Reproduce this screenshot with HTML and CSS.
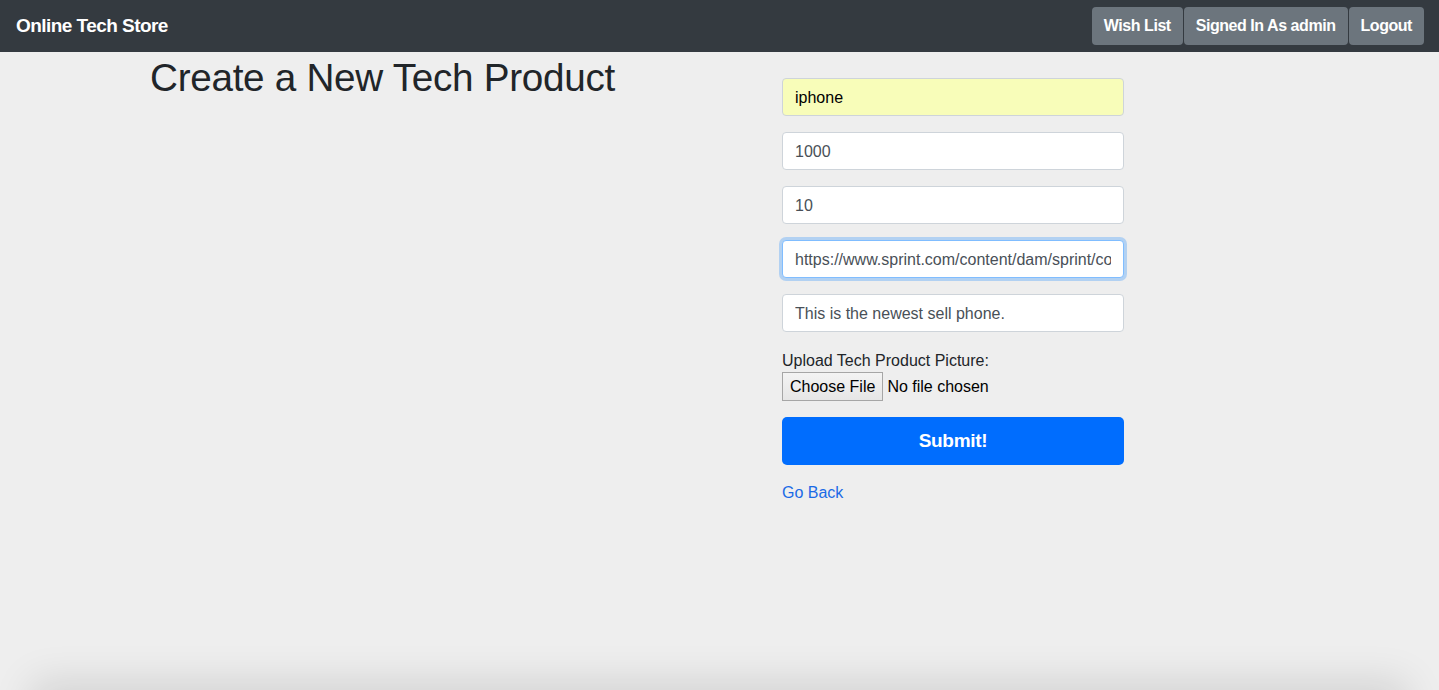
FILE: index.html
```html
<!DOCTYPE html>
<html lang="en">
<head>
<meta charset="utf-8">
<title>Online Tech Store</title>
<link rel="stylesheet" href="styles.css">
</head>
<body>
<nav class="navbar">
  <a class="brand" href="#">Online Tech Store</a>
  <div class="nav-buttons">
    <button class="btn-nav">Wish List</button>
    <button class="btn-nav">Signed In As admin</button>
    <button class="btn-nav">Logout</button>
  </div>
</nav>
<main class="page">
  <div class="left-col">
    <h1 class="title">Create a New Tech Product</h1>
  </div>
  <form class="product-form">
    <input class="field autofill" type="text" value="iphone">
    <input class="field" type="text" value="1000">
    <input class="field" type="text" value="10">
    <input class="field focused" type="text" value="https://www.sprint.com/content/dam/sprint/commerce/devices/apple/iphone_xs_max/gold/devicenb_650x900.png">
    <input class="field" type="text" value="This is the newest sell phone.">
    <label class="upload-label">Upload Tech Product Picture:</label>
    <div class="file-row">
      <button type="button" class="file-btn">Choose File</button>
      <span class="file-status">No file chosen</span>
    </div>
    <button type="button" class="submit-btn">Submit!</button>
    <a class="back-link" href="#">Go Back</a>
  </form>
</main>
<div class="bottom-shade"></div>
</body>
</html>
```

FILE: styles.css
```css
* { box-sizing: border-box; }
html, body { height: 100%; }
body {
  margin: 0;
  background: #eeeeee;
  font-family: "Liberation Sans", Arial, sans-serif;
  font-size: 16px;
  line-height: 1.5;
  color: #212529;
  overflow: hidden;
}
.navbar {
  height: 52px;
  background: #343a40;
  display: flex;
  align-items: center;
  justify-content: space-between;
  padding: 0 15px 0 16px;
}
.brand {
  color: #fff;
  text-decoration: none;
  font-size: 19px;
  font-weight: 700;
  letter-spacing: -0.55px;
}
.nav-buttons {
  display: flex;
  gap: 1px;
}
.btn-nav {
  height: 38px;
  padding: 0 12px;
  background: #6c757d;
  color: #fff;
  border: 0;
  border-radius: 4px;
  font-family: inherit;
  font-size: 16px;
  font-weight: 700;
  letter-spacing: -0.45px;
}
.page {
  display: grid;
  grid-template-columns: 632px 342px;
  padding-left: 150px;
}
.title {
  margin: 3px 0 0;
  font-size: 38.7px;
  font-weight: 400;
  line-height: 1.2;
  letter-spacing: -0.3px;
  color: #212529;
}
.product-form {
  display: flex;
  flex-direction: column;
  padding-top: 26px;
}
.field {
  height: 38px;
  width: 100%;
  margin-bottom: 16px;
  padding: 1px 12px 0;
  border: 1px solid #ced4da;
  border-radius: 4px;
  background: #fff;
  font-family: inherit;
  font-size: 16px;
  color: #495057;
  outline: none;
}
.field.autofill {
  background: #f8fdb9;
  color: #000;
}
.field.focused {
  border-color: #80bdff;
  box-shadow: 0 0 0 3px rgba(0, 123, 255, 0.25);
}
.upload-label {
  display: block;
  line-height: 24px;
  padding-top: 1px;
  margin-bottom: -1px;
}
.file-row {
  display: flex;
  align-items: center;
  gap: 4px;
  height: 29px;
  margin-bottom: 16px;
}
.file-btn {
  height: 29px;
  padding: 0 7px;
  border: 1px solid #a6a6a6;
  border-radius: 0;
  background: linear-gradient(#f3f3f3, #e6e6e6);
  font-family: inherit;
  font-size: 16px;
  color: #000;
}
.file-status {
  color: #000;
}
.submit-btn {
  height: 48px;
  width: 100%;
  border: 0;
  border-radius: 5px;
  background: #006dfe;
  color: #fff;
  font-family: inherit;
  font-size: 19px;
  font-weight: 700;
  letter-spacing: -0.3px;
  margin-bottom: 16px;
}
.back-link {
  color: #1a6ae6;
  text-decoration: none;
  line-height: 24px;
  align-self: flex-start;
}
.bottom-shade {
  position: fixed;
  left: 40px;
  right: 40px;
  bottom: -40px;
  height: 40px;
  box-shadow: 0 0 40px 8px rgba(0, 0, 0, 0.12);
  pointer-events: none;
}
```
